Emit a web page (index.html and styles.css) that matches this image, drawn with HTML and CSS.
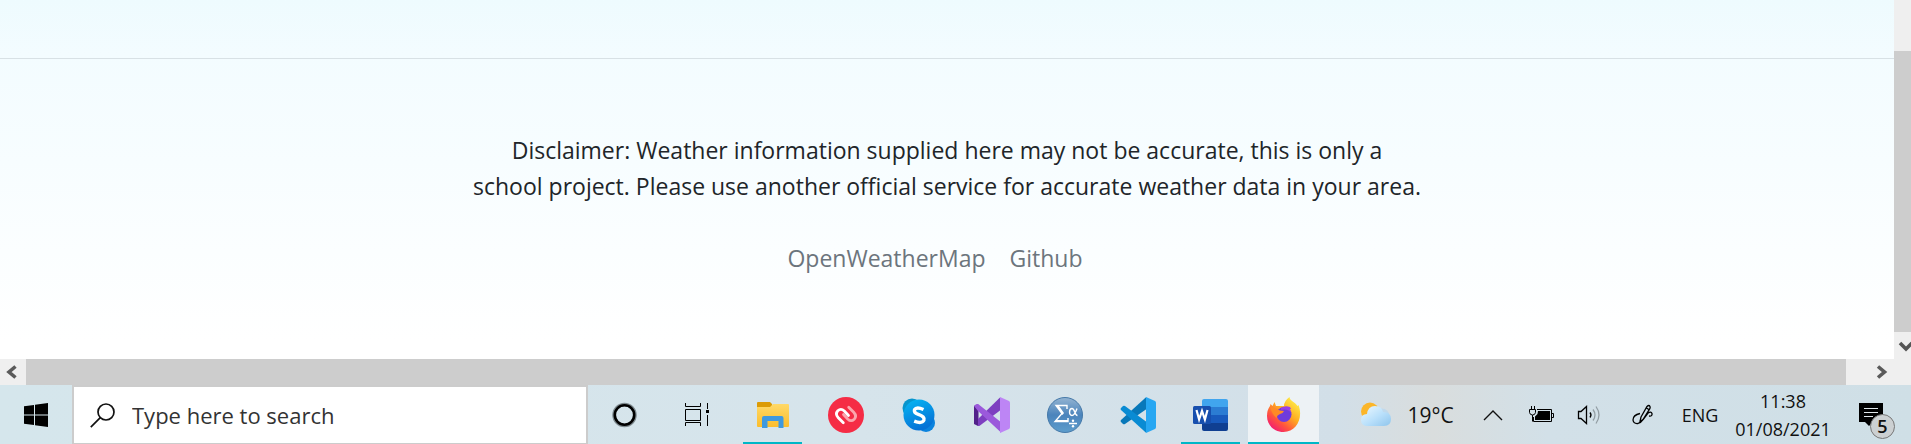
FILE: index.html
```html
<!DOCTYPE html>
<html lang="en">
<head>
<meta charset="utf-8">
<title>Weather</title>
<link rel="stylesheet" href="styles.css">
</head>
<body>
<div class="window">
  <main class="page">
    <footer class="footer">
      <p class="disclaimer">Disclaimer: Weather information supplied here may not be accurate, this is only a<br>school project. Please use another official service for accurate weather data in your area.</p>
      <nav class="links"><a href="#">OpenWeatherMap</a><a href="#">Github</a></nav>
    </footer>
  </main>
  <div class="vscroll">
    <div class="vthumb"></div>
    <svg class="varrow" width="17" height="27" viewBox="0 0 17 27"><path d="M6 11l6 6 6-6" fill="none" stroke="#555" stroke-width="3.600"/></svg>
  </div>
</div>
<div class="hscroll">
  <svg width="26" height="26" viewBox="0 0 26 26"><path d="M15.500 7.500L9 13l6.500 5.500" fill="none" stroke="#5a5a5a" stroke-width="3.600"/></svg>
  <div class="hthumb"></div>
  <svg class="harrow" width="65" height="26" viewBox="0 0 65 26"><path d="M32 7.500L38.500 13 32 18.500" fill="none" stroke="#5a5a5a" stroke-width="3.600"/></svg>
</div>
<div class="taskbar">
  <button class="start" aria-label="Start"><svg width="24" height="24" viewBox="0 0 24 24"><path d="M0 3.300L10 2v9.500H0zM11 1.800L24 0v11.500H11zM0 12.500h10V22L0 20.700zM11 12.500h13V24l-13-1.800z"/></svg></button>
  <label class="search">
    <svg width="25" height="25" viewBox="0 0 25 25" fill="none" stroke="#111" stroke-width="1.700"><circle cx="16" cy="9" r="8"/><path d="M10.300 14.700L.8 24.200"/></svg>
    <input type="text" placeholder="Type here to search" aria-label="Type here to search">
  </label>
  <div class="apps">
    <button class="app" aria-label="Cortana"><svg width="36" height="36" viewBox="0 0 36 36" fill="none"><circle cx="17.500" cy="18" r="10.500" stroke="#7d898e" stroke-width="3.500"/><circle cx="17.500" cy="18" r="9.700" stroke="#000" stroke-width="2.600"/></svg></button>
    <button class="app wide" aria-label="Task view"><svg width="36" height="36" viewBox="0 0 36 36" fill="none" stroke="#000"><path d="M4.500 6v3.500h15V6M4.500 12.500h15v11h-15zM4.500 29v-3.500h15V29M26.500 6v6M26.500 18v11"/><path d="M25 13h3v3h-3z" fill="#000" stroke="none"/></svg></button>
    <button class="app open" aria-label="File Explorer"><svg width="36" height="36" viewBox="0 0 36 36"><defs><linearGradient id="fld" x2="0" y2="1"><stop stop-color="#ffd968"/><stop offset="1" stop-color="#fbbd2c"/></linearGradient></defs><path d="M2 6q0-1 1-1h12l2 2v3H2z" fill="#dc9b06"/><path d="M2 10h13l3-3h15q1 0 1 1v21q0 1-1 1H3q-1 0-1-1z" fill="url(#fld)"/><path d="M7 31V21q0-2 2-2h17.500q2 0 2 2v10h-5v-7h-11v7z" fill="#3f99df"/></svg></button>
    <button class="app" aria-label="Authy"><svg width="36" height="36" viewBox="0 0 36 36" fill="none" stroke-width="2.800" stroke-linecap="round"><circle cx="18" cy="18" r="18" fill="#f52c45"/><path d="M20.700 10.200l5 5q3.500 3.800.5 7-3.200 3-6.500-.3l-4.200-4.400" stroke="#fba6ad"/><path d="M15.300 25.800l-5-5q-3.500-3.800-.5-7 3.200-3 6.500.3l4.200 4.400" stroke="#fff"/></svg></button>
    <button class="app" aria-label="Skype"><svg width="36" height="36" viewBox="0 0 36 36"><defs><linearGradient id="sk" x2=".4" y2="1"><stop stop-color="#06b9f4"/><stop offset="1" stop-color="#0672d6"/></linearGradient></defs><circle cx="11" cy="11" r="9.500" fill="#0795cd"/><circle cx="25" cy="26" r="9" fill="#0b83de"/><circle cx="18" cy="18" r="15.500" fill="url(#sk)"/><path d="M22.500 12.500q-7-3.200-9 .2-1 2.900 3.900 4.700 6.800 2.200 5.500 5.900-2 3.800-9.700.8" fill="none" stroke="#fff" stroke-width="3.400"/></svg></button>
    <button class="app" aria-label="Visual Studio"><svg width="36" height="36" viewBox="0 0 36 36"><path d="M0 9l4-2 .5 5v12l-.5 5-4-2z" fill="#52218a"/><path d="M4 22L26 .5 28 12 6 28.500q-1 .7-2 .5z" fill="#7d3fc0"/><path d="M0 9q3-3.500 6-.5L28 26l-1 9.500L4 14z" fill="#9b59db"/><path d="M26 0l9 4q1 .5 1 2v24q0 1.500-1 2l-9 4z" fill="#bd85f5"/></svg></button>
    <button class="app" aria-label="Equation Editor"><svg width="36" height="36" viewBox="0 0 36 36"><defs><linearGradient id="eq" x2="0" y2="1"><stop stop-color="#94b4d2"/><stop offset=".5" stop-color="#4b84bc"/><stop offset="1" stop-color="#5d9dcc"/></linearGradient></defs><circle cx="18" cy="18" r="17.500" fill="url(#eq)" stroke="#4679a8"/><path d="M20 12V8.500H9l6 8-7 8h13V21M10 9l5.500 7.500M30 11.500q-2.500 7-5 7c-3.500 0-3-7 0-7 3 0 2.500 7 5.500 7M22 26.500h8" fill="none" stroke="#fff" stroke-width="1.400"/><path d="M10 9h2l5 7-1.500 2zM9 23h12v2H8z" fill="#fff"/><circle cx="26" cy="23.700" r="1.200" fill="#fff"/><circle cx="26" cy="29.300" r="1.200" fill="#fff"/></svg></button>
    <button class="app" aria-label="Visual Studio Code"><svg width="36" height="36" viewBox="0 0 36 36"><path d="M1 23L26 .3 28 11 5 27q-1 .5-2 0l-2-2q-1-1 0-2z" fill="#0878b9"/><path d="M1 13q-1-1 0-2l2-2q1-.6 2 0l23 17-2 9.700z" fill="#098bd3"/><path d="M26 0l9 4q1 .5 1 2v24q0 1.500-1 2l-9 4z" fill="#27a7f2"/></svg></button>
    <button class="app open" aria-label="Word"><svg width="36" height="36" viewBox="0 0 36 36"><path d="M9 9V4q0-2 2-2h22q2 0 2 2v6H9z" fill="#41a5ee"/><path d="M9 10h26v8H9z" fill="#2b7cd3"/><path d="M9 18h26v8H9z" fill="#185abd"/><path d="M9 26h26v6q0 2-2 2H11q-2 0-2-2z" fill="#103f91"/><rect y="9" width="18" height="18" rx="1.500" fill="#174fae"/><path d="M3.500 13l2.600 9.500L9 14l2.900 8.500L14.500 13" fill="none" stroke="#fff" stroke-width="2.200"/></svg></button>
    <button class="app open current" aria-label="Firefox"><svg width="36" height="36" viewBox="0 0 36 36"><defs><linearGradient id="ff" x1=".9" y1=".1" x2=".2" y2="1"><stop stop-color="#fff04a"/><stop offset=".4" stop-color="#ffad20"/><stop offset=".7" stop-color="#ff553d"/><stop offset="1" stop-color="#f0147b"/></linearGradient></defs><path d="M23.500 0c0 4 6 5 8 9l1-1c5 13-2 27-15 27C8 35 1 28 1 19q0-6 3-10l.5-2 2 2 2-4 1.500 4 8 0q0-5 5.500-9z" fill="url(#ff)"/><circle cx="18" cy="17.500" r="7.500" fill="#6f3bdc"/><path d="M15 11q4-3 9-1l1 2q-1 .5-2 0 2 1 2.500 4-4-5-10.500-3z" fill="#9a3fe4"/><path d="M4 10l5 1 5 2.500 4 .5q-1 2.500-4 3-3 1-3.500 4-4-3-6.500-11z" fill="#ff8a25"/></svg></button>
  </div>
  <div class="tray">
    <button class="weather"><svg width="32" height="26" viewBox="0 0 32 26"><defs><linearGradient id="cl" x2="1" y2="1"><stop stop-color="#eef9ff"/><stop offset=".55" stop-color="#b9e0fb"/><stop offset="1" stop-color="#8fc5ec"/></linearGradient></defs><circle cx="10" cy="9.500" r="9" fill="#fbb62a"/><circle cx="22" cy="14" r="7.500" fill="#c0d9ec"/><path d="M8 24q-7 0-7-6t6-6q1-8 8-8t8 6q8 0 8 7t-7 7z" fill="url(#cl)"/></svg><span>19°C</span></button>
    <button class="cell" aria-label="Show hidden icons"><svg width="20" height="12" viewBox="0 0 20 12"><path d="M1 11l9-9 9 9" fill="none" stroke="#111" stroke-width="1.400"/></svg></button>
    <button class="cell" aria-label="Battery"><svg width="26" height="20" viewBox="0 0 26 20" fill="none" stroke="#000"><path d="M9 4.500h14.500v12H5.500V12"/><path d="M10 6h12v9H7v-3.500L9.500 9z" fill="#000" stroke="none"/><path d="M24 8.500h1.500v4H24M3.500 1v3M6.500 1v3M1.500 4.500h6v3q-.5 2.500-3 2.500t-3-2.500zM4.500 10v6.500"/></svg></button>
    <button class="cell" aria-label="Volume"><svg width="24" height="20" viewBox="0 0 24 20" fill="none" stroke="#000" stroke-width="1.300"><path d="M1.500 6.500H4L9.500 1.500v17L4 13.500H1.500zM13 7.500q2 2.500 0 5"/><path d="M16 4.500q4 5.500 0 11M19 1.500q6 8.500 0 17" stroke="#929da3"/></svg></button>
    <button class="cell pen" aria-label="Ink workspace"><svg width="22" height="22" viewBox="0 0 22 22" fill="none" stroke="#000" stroke-width="1.300"><path d="M9 13L15 2.500q2-2 3 0 .5 1-.3 2.300L11 15.500l-3 2zM14.500 4l3 2M8 9.500Q1 11 1 16q.5 4 5 3.500 3-1 5.500-4.500L16 9q3-2 4 .5.500 3-3 2.500"/></svg></button>
    <button class="lang">ENG</button>
    <button class="clock"><span>11:38</span><span>01/08/2021</span></button>
    <button class="notes" aria-label="Notifications"><svg width="24" height="24" viewBox="0 0 24 24"><path d="M0 0h24v19H14l-4 4-4-4H0z"/><path d="M5 5.500h14M5 9.500h14M5 13.500h9" stroke="#dfe6ea" stroke-width="1"/></svg><span class="badge">5</span></button>
  </div>
</div>
</body>
</html>
```
FILE: styles.css
```css
* { box-sizing: border-box; }
body {
  margin: 0;
  min-height: 100vh;
  display: flex;
  flex-direction: column;
  font-family: "Segoe UI", "Open Sans", "Noto Sans", sans-serif;
  color: #212529;
  background: #efefef;
}
button {
  border: 0;
  padding: 0;
  background: none;
  font: inherit;
  color: #111;
  display: flex;
  align-items: center;
  justify-content: center;
}
svg { display: block; flex: none; }

.window { flex: 1; display: flex; }
.page {
  flex: 1;
  padding-top: 58px;
  background: linear-gradient(#eefbfe, #f3fcff 15%, #f7fdff 45%, #fff 95%);
}
.footer {
  border-top: 1px solid #d8e1e5;
  padding: 73px 24px 80px;
  text-align: center;
  font-size: 23px;
  line-height: 36px;
}
.disclaimer { margin: 0 0 36px; }
.links a {
  color: #6c757d;
  text-decoration: none;
  margin-right: 24px;
}

.vscroll {
  width: 17px;
  padding-top: 51px;
  display: flex;
  flex-direction: column;
  background: #efefef;
}
.vthumb { flex: 1; background: #cdcdcd; }

.hscroll { display: flex; background: #efefef; }
.hthumb { flex: 1; background: #cdcdcd; }

.taskbar {
  height: 59px;
  display: flex;
  background: linear-gradient(90deg, #d5e6ec, #d6e4eb 45%, #d2dfe8 70%, #d9dddd 75%, #d2e0e8 81%, #cfdfe6);
}
.start { width: 72px; }
.search {
  width: 516px;
  border: 2px solid #ccc;
  border-bottom-width: 1px;
  background: #fff;
  display: flex;
  align-items: center;
  gap: 17px;
  padding-left: 16px;
}
.search input {
  flex: 1;
  min-width: 0;
  border: 0;
  padding: 0;
  outline: 0;
  background: none;
  font: inherit;
  font-size: 22px;
  line-height: 32px;
}
.search input::placeholder { color: #333; opacity: 1; }

.apps { display: flex; }
.app { width: 73px; position: relative; }
.wide { width: 75px; }
.app.open::after {
  content: "";
  position: absolute;
  left: 7px;
  right: 7px;
  bottom: 0;
  height: 2px;
  background: #00b7c7;
}
.app.current { background: linear-gradient(#edf2f5, #edf2f5) center / 71px 100% no-repeat; }
.app.current::after { left: 1px; right: 1px; }

.tray {
  margin-left: auto;
  padding-right: 8px;
  display: flex;
  font-size: 18px;
}
.weather {
  width: 124px;
  gap: 15px;
  font-size: 21px;
}
.cell { width: 48px; }
.pen { width: 60px; }
.lang { width: 54px; }
.clock {
  width: 112px;
  flex-direction: column;
  line-height: 28px;
}
.notes { width: 64px; position: relative; }
.badge {
  position: absolute;
  left: 31px;
  top: 29px;
  width: 25px;
  height: 25px;
  border: 1px solid #777;
  border-radius: 50%;
  background: #ccd0d2;
  line-height: 23px;
  font-weight: 600;
}
```
